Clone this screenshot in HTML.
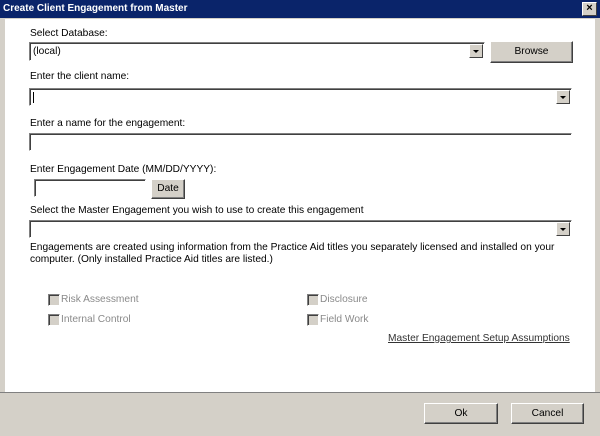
<!DOCTYPE html>
<html><head><style>
*{margin:0;padding:0;box-sizing:border-box}
body{width:600px;height:436px;position:relative;background:#d4d0c8;font-family:"Liberation Sans",sans-serif;font-size:10.2px;color:#000;overflow:hidden}
.a{position:absolute}
.title{left:0;top:0;width:600px;height:18px;background:#0a246a;color:#fff;font-weight:bold;font-size:10px;line-height:18px;padding-left:3px}
.close{left:582px;top:2px;width:15px;height:14px;background:#d4d0c8;border:1px solid;border-color:#fff #404040 #404040 #fff;color:#000;font-size:11px;line-height:11px;text-align:center;font-weight:bold}
.content{left:5px;top:19px;width:590px;height:373px;background:#fff}
.inp{background:#fff;border:1px solid;border-color:#808080 #fff #fff #808080;box-shadow:inset 1px 1px 0 #404040}
.arrow{position:absolute;right:1px;top:1px;width:14px;height:14px;background:#d4d0c8;border:1px solid;border-color:#fff #404040 #404040 #fff}
.arrow:after{content:"";position:absolute;left:3px;top:5px;border-left:3px solid transparent;border-right:3px solid transparent;border-top:3px solid #000}
.btn{background:#d4d0c8;border:1px solid;border-color:#fff #404040 #404040 #fff;box-shadow:inset -1px -1px 0 #808080;text-align:center}
.cb{width:12px;height:12px;background:#d4d0c8;border:1px solid;border-color:#808080 #fff #fff #808080;box-shadow:inset 1px 1px 0 #404040}
.dis{color:#8a8a8a}
</style></head><body>
<div class="a title">Create Client Engagement from Master</div>
<div class="a close">×</div>
<div class="a content"></div>
<div class="a" style="left:0;top:392px;width:600px;height:1px;background:#808080"></div>
<div class="a" style="left:30px;top:28px">Select Database:</div>
<div class="a inp" style="left:29px;top:42px;width:456px;height:19px"><span class="a" style="left:3px;top:3px">(local)</span><div class="arrow"></div></div>
<div class="a btn" style="left:490px;top:41px;width:83px;height:22px;line-height:20px">Browse</div>
<div class="a" style="left:30px;top:71px">Enter the client name:</div>
<div class="a inp" style="left:29px;top:88px;width:543px;height:18px"><span class="a" style="left:3px;top:3px;width:1px;height:11px;background:#000"></span><div class="arrow"></div></div>
<div class="a" style="left:30px;top:118px">Enter a name for the engagement:</div>
<div class="a inp" style="left:29px;top:133px;width:543px;height:18px"></div>
<div class="a" style="left:30px;top:164px">Enter Engagement Date (MM/DD/YYYY):</div>
<div class="a inp" style="left:34px;top:179px;width:112px;height:18px"></div>
<div class="a btn" style="left:151px;top:179px;width:34px;height:20px;line-height:18px">Date</div>
<div class="a" style="left:30px;top:205px">Select the Master Engagement you wish to use to create this engagement</div>
<div class="a inp" style="left:29px;top:220px;width:543px;height:18px"><div class="arrow"></div></div>
<div class="a" style="left:30px;top:242px;width:550px;line-height:12px">Engagements are created using information from the Practice Aid titles you separately licensed and installed on your computer. (Only installed Practice Aid titles are listed.)</div>
<div class="a cb" style="left:48px;top:294px"></div><div class="a dis" style="left:61px;top:294px">Risk Assessment</div>
<div class="a cb" style="left:48px;top:314px"></div><div class="a dis" style="left:61px;top:314px">Internal Control</div>
<div class="a cb" style="left:307px;top:294px"></div><div class="a dis" style="left:320px;top:294px">Disclosure</div>
<div class="a cb" style="left:307px;top:314px"></div><div class="a dis" style="left:320px;top:314px">Field Work</div>
<div class="a" style="left:388px;top:333px;color:#333;text-decoration:underline">Master Engagement Setup Assumptions</div>
<div class="a btn" style="left:424px;top:403px;width:74px;height:21px;line-height:19px">Ok</div>
<div class="a btn" style="left:511px;top:403px;width:73px;height:21px;line-height:19px">Cancel</div>
</body></html>
